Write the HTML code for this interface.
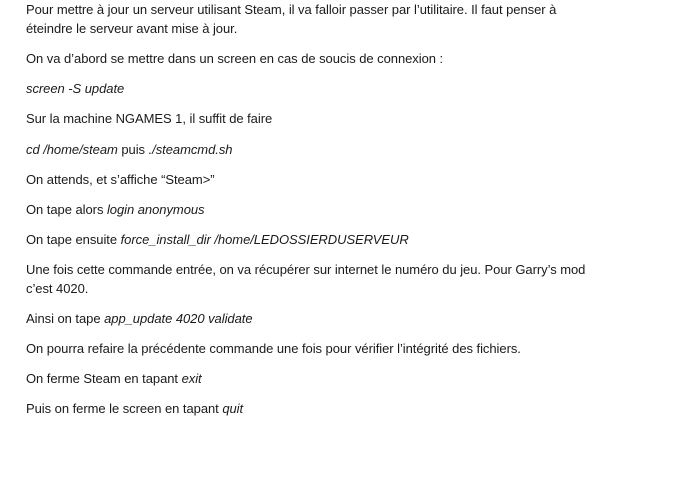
<!DOCTYPE html>
<html><head><meta charset="utf-8"><style>
body{margin:0;width:680px;height:484px;background:#fff;overflow:hidden;}
.l{position:absolute;left:26px;font-family:"Liberation Sans",sans-serif;font-size:13px;line-height:19px;color:#1a1a1a;white-space:nowrap;letter-spacing:-0.05px;}
i{font-style:italic;}
</style></head><body>
<div class="l" style="top:0px">Pour mettre à jour un serveur utilisant Steam, il va falloir passer par l’utilitaire. Il faut penser à</div>
<div class="l" style="top:19px">éteindre le serveur avant mise à jour.</div>
<div class="l" style="top:49px">On va d’abord se mettre dans un screen en cas de soucis de connexion :</div>
<div class="l" style="top:79px"><i>screen -S update</i></div>
<div class="l" style="top:109px">Sur la machine NGAMES 1, il suffit de faire</div>
<div class="l" style="top:140px"><i>cd /home/steam</i> puis <i>./steamcmd.sh</i></div>
<div class="l" style="top:170px">On attends, et s’affiche “Steam&gt;”</div>
<div class="l" style="top:200px">On tape alors <i>login anonymous</i></div>
<div class="l" style="top:230px">On tape ensuite <i>force_install_dir /home/LEDOSSIERDUSERVEUR</i></div>
<div class="l" style="top:260px">Une fois cette commande entrée, on va récupérer sur internet le numéro du jeu. Pour Garry’s mod</div>
<div class="l" style="top:279px">c’est 4020.</div>
<div class="l" style="top:309px">Ainsi on tape <i>app_update 4020 validate</i></div>
<div class="l" style="top:339px">On pourra refaire la précédente commande une fois pour vérifier l’intégrité des fichiers.</div>
<div class="l" style="top:369px">On ferme Steam en tapant <i>exit</i></div>
<div class="l" style="top:399px">Puis on ferme le screen en tapant <i>quit</i></div>
</body></html>
